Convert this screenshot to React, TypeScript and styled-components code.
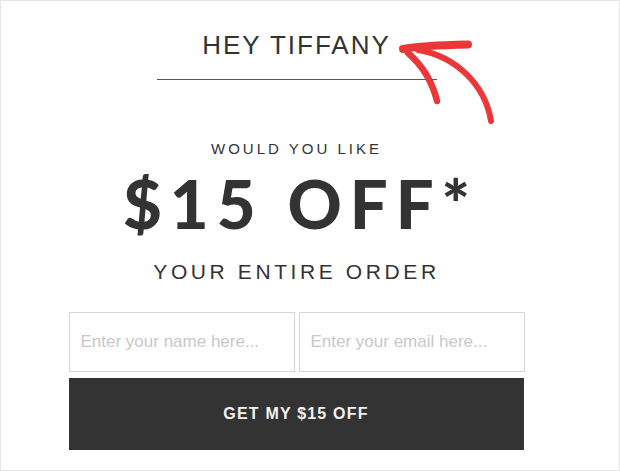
import React from "react";
import styled, { createGlobalStyle } from "styled-components";

const Global = createGlobalStyle`
  html, body { margin: 0; padding: 0; background: #ffffff; }
  * { box-sizing: border-box; }
`;

const Frame = styled.div`
  position: relative;
  width: 620px;
  height: 471px;
  border: 1px solid #e6e6e6;
  background: #ffffff;
  overflow: hidden;
`;

const Column = styled.div`
  width: 455px;
  margin-left: 68px;
  padding-top: 31px;
  display: flex;
  flex-direction: column;
  align-items: center;
  color: #333333;
  font-family: "Liberation Sans", Arial, sans-serif;
`;

const Greeting = styled.h1`
  margin: 0;
  font-size: 26px;
  line-height: 26px;
  font-weight: 400;
  letter-spacing: 2px;
  color: #333333;
  white-space: nowrap;
`;

const Divider = styled.div`
  width: 280px;
  height: 1px;
  margin-top: 21px;
  background: #555555;
`;

const Line = styled.p<{ $size: number; $spacing: number; $gap: number }>`
  margin: ${(p) => p.$gap}px 0 0;
  font-size: ${(p) => p.$size}px;
  line-height: ${(p) => p.$size}px;
  letter-spacing: ${(p) => p.$spacing}px;
  font-weight: 400;
  white-space: nowrap;
`;

const Offer = styled.h2`
  margin: 13.5px 0 0;
  padding-left: 8px;
  font-family: "Lato", "Open Sans", sans-serif;
  font-weight: 900;
  font-size: 67px;
  line-height: 66px;
  letter-spacing: 8px;
  color: #333333;
  white-space: nowrap;
`;

const Form = styled.form`
  width: 456px;
  margin-top: 30.5px;
  display: flex;
  flex-direction: column;
  gap: 6px;
`;

const Fields = styled.div`
  display: grid;
  grid-template-columns: 1fr 1fr;
  gap: 4px;
`;

const Field = styled.input`
  height: 60px;
  width: 100%;
  border: 1px solid #d6d6d6;
  padding: 0 11px;
  font-family: "Liberation Sans", Arial, sans-serif;
  font-size: 17px;
  color: #333;
  background: #fff;
  outline: none;
  &::placeholder { color: #c8c8c8; }
`;

const Submit = styled.button`
  height: 72px;
  width: 455px;
  border: none;
  background: #333333;
  color: #f2f2f2;
  font-family: "Liberation Sans", Arial, sans-serif;
  font-weight: 700;
  font-size: 16px;
  letter-spacing: 1.2px;
  cursor: pointer;
`;

const Scribble = styled.svg`
  position: absolute;
  left: -1px;
  top: -1px;
  width: 620px;
  height: 471px;
  pointer-events: none;
`;

export default function App() {
  return (
    <>
      <Global />
      <Frame>
        <Column>
          <Greeting>HEY TIFFANY</Greeting>
          <Divider />
          <Line $size={15} $spacing={3} $gap={61}>WOULD YOU LIKE</Line>
          <Offer>$15 OFF*</Offer>
          <Line $size={21} $spacing={3.6} $gap={25}>YOUR ENTIRE ORDER</Line>
          <Form onSubmit={(e) => e.preventDefault()}>
            <Fields>
              <Field type="text" placeholder="Enter your name here..." />
              <Field type="email" placeholder="Enter your email here..." />
            </Fields>
            <Submit type="submit">GET MY $15 OFF</Submit>
          </Form>
        </Column>
        <Scribble viewBox="0 0 620 471">
          <g fill="none" stroke="#ea3838" strokeLinecap="round" strokeLinejoin="round">
            <path d="M403 49 Q421 45.5 468 44.5" strokeWidth={8} />
            <path d="M408 53 Q430 72 437 101" strokeWidth={6.5} />
            <path d="M418 50 C455 56 485 84 491 121" strokeWidth={6} />
          </g>
        </Scribble>
      </Frame>
    </>
  );
}
